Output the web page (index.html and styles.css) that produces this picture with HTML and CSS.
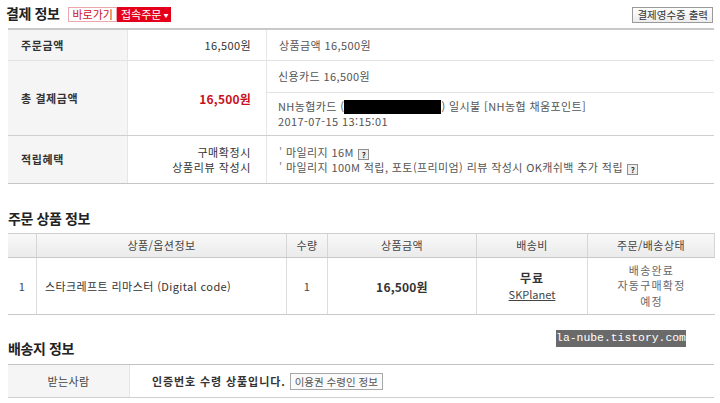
FILE: index.html
```html
<!DOCTYPE html>
<html lang="ko">
<head>
<meta charset="utf-8">
<link rel="stylesheet" href="styles.css">
</head>
<body>
<div class="page">
  <div class="sec-head">
    <h2 class="title">결제 정보</h2>
    <span class="btn-outline">바로가기</span>
    <span class="btn-red">접속주문<span class="caret">▼</span></span>
    <span class="spacer"></span>
    <span class="btn-gray">결제영수증 출력</span>
  </div>

  <div class="pay">
    <div class="prow r1">
      <div class="lab bold">주문금액</div>
      <div class="amt">16,500원</div>
      <div class="det">상품금액 16,500원</div>
    </div>
    <div class="prow r2">
      <div class="lab bold">총 결제금액</div>
      <div class="amt total">16,500원</div>
      <div class="split">
        <div class="sub1">신용카드 16,500원</div>
        <div class="sub2">
          <div>NH농협카드 (<span class="redact"></span>) 일시불 [NH농협 채움포인트]</div>
          <div>2017-07-15 13:15:01</div>
        </div>
      </div>
    </div>
    <div class="prow r3">
      <div class="lab bold">적립혜택</div>
      <div class="amt cond">
        <div>구매확정시</div>
        <div>상품리뷰 작성시</div>
      </div>
      <div class="det lines">
        <div><span class="tick">'</span> 마일리지 16M <span class="q">?</span></div>
        <div><span class="tick">'</span> 마일리지 100M 적립, 포토(프리미엄) 리뷰 작성시 OK캐쉬백 추가 적립 <span class="q">?</span></div>
      </div>
    </div>
  </div>

  <h2 class="title t2">주문 상품 정보</h2>

  <div class="items">
    <div class="irow ihead">
      <div class="ic"></div>
      <div class="ic">상품/옵션정보</div>
      <div class="ic">수량</div>
      <div class="ic">상품금액</div>
      <div class="ic">배송비</div>
      <div class="ic">주문/배송상태</div>
    </div>
    <div class="irow ibody">
      <div class="ic">1</div>
      <div class="ic name">스타크레프트 리마스터 (Digital code)</div>
      <div class="ic">1</div>
      <div class="ic bold price">16,500원</div>
      <div class="ic stack">
        <div class="bold free">무료</div>
        <div class="link">SKPlanet</div>
      </div>
      <div class="ic stack status">
        <div>배송완료</div>
        <div>자동구매확정</div>
        <div>예정</div>
      </div>
    </div>
  </div>

  <h2 class="title t3">배송지 정보</h2>

  <div class="ship">
    <div class="slab">받는사람</div>
    <div class="sval"><span class="bold notice">인증번호 수령 상품입니다.</span><span class="btn-small">이용권 수령인 정보</span></div>
  </div>

  <div class="wm">la-nube.tistory.com</div>
</div>
</body>
</html>
```

FILE: styles.css
```css
* { box-sizing: border-box; }
html, body { margin: 0; padding: 0; background: #fff; }
body {
  font-family: "Noto Sans CJK KR", "Noto Sans", sans-serif;
  font-size: 11px;
  color: #333;
  line-height: 15px;
  letter-spacing: 0.4px;
}
.page {
  position: relative;
  width: 720px;
  height: 403px;
  padding-left: 8px;
  overflow: hidden;
}
.bold { font-weight: bold; }

.sec-head {
  display: flex;
  align-items: center;
  height: 28px;
  width: 707px;
  margin-left: -2px;
}
.title {
  margin: 0;
  font-size: 14px;
  font-weight: bold;
  line-height: 20px;
  color: #222;
  letter-spacing: -0.4px;
}
.sec-head .title { margin-right: 9px; margin-top: -2px; }
.btn-outline {
  display: inline-block;
  height: 15px;
  line-height: 13px;
  padding: 0 3px;
  border: 1px solid #eba9ad;
  color: #d0101e;
  font-size: 11px;
  letter-spacing: 0;
  background: #fff;
}
.btn-red {
  display: inline-block;
  height: 15px;
  line-height: 15px;
  padding: 0 3px 0 4px;
  background: #e4001a;
  color: #fff;
  font-size: 11px;
  letter-spacing: 0;
}
.caret { font-size: 5px; margin-left: 2px; vertical-align: 2px; }
.spacer { flex: 1; }
.btn-gray {
  display: inline-block;
  height: 16px;
  line-height: 14px;
  padding: 0 4px;
  border: 1px solid #9a9a9a;
  background: linear-gradient(#fff, #ececec);
  color: #333;
  font-size: 10.5px;
  letter-spacing: 0;
  margin-top: 2px;
}

/* payment table */
.pay {
  width: 706px;
  border-top: 2px solid #c9c9c9;
}
.prow {
  display: grid;
  grid-template-columns: 120px 139px 447px;
  border-bottom: 1px solid #e3e3e3;
}
.r1 { height: 31px; }
.r2 { height: 75px; border-bottom-color: #cfcfcf; }
.r3 { height: 48px; border-bottom-color: #c6c6c6; }
.lab {
  background: #f5f5f5;
  border-right: 1px solid #e6e6e6;
  display: flex;
  align-items: center;
  padding-left: 13px;
  color: #333;
  letter-spacing: 0.6px;
}
.amt {
  border-right: 1px solid #e6e6e6;
  display: flex;
  align-items: center;
  justify-content: flex-end;
  padding-right: 15px;
  color: #333;
}
.total { color: #c8101e; font-weight: bold; font-size: 12px; letter-spacing: 0.2px; }
.cond {
  flex-direction: column;
  align-items: flex-end;
  justify-content: center;
  letter-spacing: 0.6px;
}
.det {
  display: flex;
  align-items: center;
  padding-left: 12px;
  color: #555;
}
.lines {
  flex-direction: column;
  align-items: flex-start;
  justify-content: center;
  line-height: 15px;
}
.tick { color: #888; }
.q {
  display: inline-block;
  width: 11px;
  height: 11px;
  border: 1px solid #8e8e8e;
  background: #eee;
  font-size: 8px;
  font-weight: bold;
  line-height: 9px;
  text-align: center;
  color: #333;
  letter-spacing: 0;
  vertical-align: -1px;
  margin-left: 1px;
}
.split { display: flex; flex-direction: column; color: #555; }
.sub1 {
  height: 32px;
  border-bottom: 1px solid #e3e3e3;
  display: flex;
  align-items: center;
  padding-left: 11px;
}
.sub2 {
  flex: 1;
  display: flex;
  flex-direction: column;
  justify-content: center;
  padding-left: 11px;
  line-height: 15px;
}
.redact {
  display: inline-block;
  width: 97px;
  height: 14px;
  background: #000;
  vertical-align: -3px;
}

/* items */
.t2 { margin-top: 24px; margin-bottom: 5px; }
.items { width: 707px; }
.irow {
  display: grid;
  grid-template-columns: 29px 250px 41px 149px 111px 127px;
}
.ihead {
  height: 25px;
  border-top: 1px solid #cfcfcf;
  border-bottom: 1px solid #c9c9c9;
  background: linear-gradient(#f8f8f8, #ebebeb);
}
.ibody { height: 57px; border-bottom: 1px solid #c9c9c9; }
.ic {
  display: flex;
  align-items: center;
  justify-content: center;
  border-right: 1px solid #dcdcdc;
  color: #444;
}
.ihead .ic { border-right-color: #d6d6d6; }
.irow .ic:last-child { border-right: none; }
.ihead .ic:last-child { border-right: 1px solid #d6d6d6; }
.name { justify-content: flex-start; padding-left: 8px; color: #333; }
.price { font-size: 12px; color: #333; letter-spacing: 0.2px; }
.stack { flex-direction: column; line-height: 16px; }
.free { font-size: 12px; color: #333; letter-spacing: 1px; }
.link { text-decoration: underline; color: #444; letter-spacing: 0; }
.status { color: #666; letter-spacing: 1.2px; line-height: 15.5px; }

/* shipping */
.t3 { margin-top: 23px; margin-bottom: 6px; }
.ship {
  width: 706px;
  height: 34px;
  display: grid;
  grid-template-columns: 122px 1fr;
  border-top: 1px solid #c3c3c3;
  border-bottom: 1px solid #cfcfcf;
}
.slab {
  background: #f5f5f5;
  border-right: 1px solid #e6e6e6;
  display: flex;
  align-items: center;
  justify-content: center;
  color: #444;
}
.sval {
  display: flex;
  align-items: center;
  padding-left: 22px;
}
.notice { color: #333; letter-spacing: 0.9px; margin-right: 4px; }
.btn-small {
  display: inline-block;
  height: 17px;
  line-height: 15px;
  padding: 0 4px;
  border: 1px solid #a8a8a8;
  background: #fafafa;
  color: #555;
  font-size: 10.5px;
  letter-spacing: 0;
}

/* watermark overlay */
.wm {
  position: absolute;
  left: 556px;
  top: 330px;
  width: 130px;
  height: 17px;
  background: #6a6a6a;
  color: #fff;
  font-family: "Liberation Mono", "DejaVu Sans Mono", monospace;
  font-size: 11.4px;
  line-height: 17px;
  letter-spacing: 0;
  text-align: center;
}
```
